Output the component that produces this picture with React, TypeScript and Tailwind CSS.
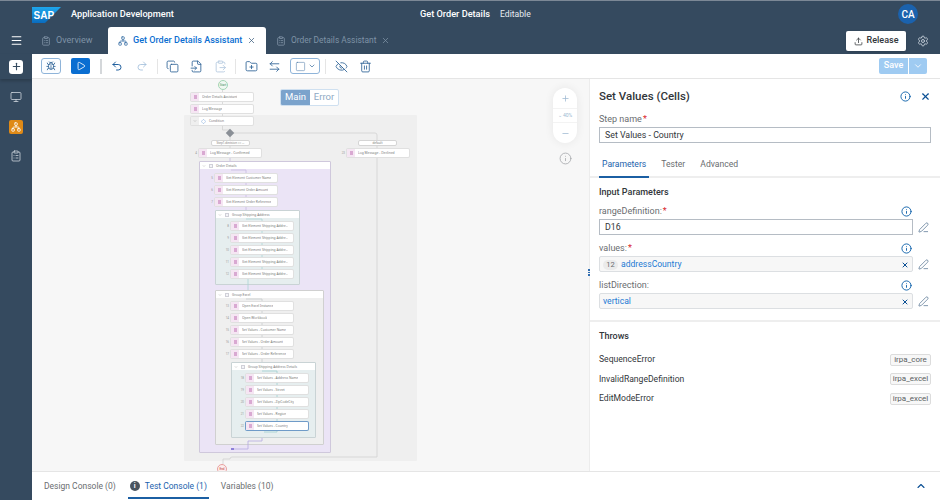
import React from "react";
import {
  Menu, Plus, Monitor, ClipboardList, Network, X, Upload, Settings, Bug, Play, Undo2, Redo2, Copy, FileInput,
  ClipboardPaste, FolderPlus, ArrowLeftRight, Square, ChevronDown, ChevronUp, EyeOff, Trash2, Info, Minus, PenLine, Diamond,
} from "lucide-react";

type N = { x: number; y: number; t: string; n?: string; sel?: boolean; w?: number };
const nodes: N[] = [
  { x: 191, y: 93, t: "Order Details Assistant" },
  { x: 191, y: 105, t: "Log Message" },
  { x: 199, y: 149, t: "Log Message - Confirmed", n: "4" },
  { x: 347, y: 149, t: "Log Message - Declined", n: "23" },
  { x: 215, y: 174, t: "Get Element Customer Name", n: "5" },
  { x: 215, y: 186, t: "Get Element Order Amount", n: "6" },
  { x: 215, y: 198, t: "Get Element Order Reference", n: "7" },
  { x: 231, y: 222, t: "Get Element Shipping Addre...", n: "8" },
  { x: 231, y: 234, t: "Get Element Shipping Addre...", n: "9" },
  { x: 231, y: 246, t: "Get Element Shipping Addre...", n: "10" },
  { x: 231, y: 258, t: "Get Element Shipping Addre...", n: "11" },
  { x: 231, y: 270, t: "Get Element Shipping Addre...", n: "12" },
  { x: 231, y: 302, t: "Open Excel Instance", n: "13" },
  { x: 231, y: 314, t: "Open Workbook", n: "14" },
  { x: 231, y: 326, t: "Set Values - Customer Name", n: "15" },
  { x: 231, y: 338, t: "Set Values - Order Amount", n: "16" },
  { x: 231, y: 350, t: "Set Values - Order Reference", n: "17" },
  { x: 246, y: 374, t: "Set Values - Address Name", n: "18" },
  { x: 246, y: 386, t: "Set Values - Street", n: "19" },
  { x: 246, y: 398, t: "Set Values - ZipCodeCity", n: "20" },
  { x: 246, y: 410, t: "Set Values - Region", n: "21" },
  { x: 246, y: 422, t: "Set Values - Country", n: "22", sel: true },
];
const groups = [
  { x: 199, y: 161, w: 132, h: 292, t: "Order Details", c: "bg-[#ebe4f6] border-[#cfc8dc]" },
  { x: 215, y: 210, w: 85, h: 75, t: "Group Shipping Address", c: "bg-[#e6eeef] border-[#c9d3d5]" },
  { x: 215, y: 290, w: 109, h: 155, t: "Group Excel", c: "bg-[#efefef] border-[#d0d0d0]" },
  { x: 231, y: 362, w: 85, h: 76, t: "Group Shipping Address Details", c: "bg-[#e6eeef] border-[#c9d3d5]" },
];

function Node({ x, y, t, n, sel }: N) {
  return (
    <div
      className={`absolute flex h-[8px] w-[62px] items-center rounded-[1px] bg-white ${sel ? "shadow-[0_0_0_1px_#6f9bc8]" : "shadow-[0_0_0_1px_#e0e0e0]"}`}
      style={{ left: x, top: y }}
    >
      {n && <span className="absolute left-[-8px] top-[3px] w-[6px] text-right text-[3px] leading-none text-[#999]">{n}</span>}
      <span className="flex h-full w-[8px] items-center justify-center bg-[#f5e6f3]">
        <span className="h-[4px] w-[3px] bg-[#d9a9d2]" />
      </span>
      <span className="ml-[3px] truncate font-['Noto_Sans',sans-serif] text-[3.3px] leading-none text-[#777]">{t}</span>
    </div>
  );
}

function Group({ x, y, w, h, t, c }: { x: number; y: number; w: number; h: number; t: string; c: string }) {
  return (
    <div className={`absolute rounded-[1px] border ${c}`} style={{ left: x, top: y, width: w, height: h }}>
      <div className="flex h-[7px] items-center bg-white">
        <ChevronDown className="ml-[2px] h-[4px] w-[4px] text-[#999]" />
        <span className="ml-[3px] h-[4px] w-[4px] border border-[#d0d0d8] bg-[#f4f4f8]" />
        <span className="ml-[3px] font-['Noto_Sans',sans-serif] text-[3.3px] leading-none text-[#777]">{t}</span>
      </div>
    </div>
  );
}

function Pencil() {
  return <PenLine className="h-[11px] w-[11px] text-[#4b6a8a]" strokeWidth={1.5} />;
}

function Field({ label, req, children }: { label: string; req?: boolean; children: React.ReactNode }) {
  return (
    <div className="mb-[6px]">
      <div className="flex h-[15px] items-center pr-[18px]">
        <span className="text-[9px] text-[#6a6d70]">{label}</span>
        {req && <span className="ml-[1px] text-[9px] text-[#d9262c]">*</span>}
        <Info className="ml-auto mr-[1px] h-[11px] w-[11px] text-[#0a5ea8]" />
      </div>
      <div className="flex items-center">
        <div className="flex h-[16px] w-[314px] items-center">{children}</div>
        <span className="ml-[5px]"><Pencil /></span>
      </div>
    </div>
  );
}

function Tool({ icon: I, light }: { icon: typeof Copy; light?: boolean }) {
  return <I className={`h-[13px] w-[13px] ${light ? "text-[#b4c9df]" : "text-[#2f6497]"}`} strokeWidth={1.6} />;
}

function Sep({ thick }: { thick?: boolean }) {
  return <span className={`block h-[15px] ${thick ? "w-[2px] bg-[#d4d7da]" : "w-px bg-[#e5e5e5]"}`} />;
}

function Throw({ name, badge }: { name: string; badge: string }) {
  return (
    <div className="flex h-[19.5px] items-center justify-between">
      <span className="text-[8.6px] text-[#32363a]">{name}</span>
      <span className="flex h-[12px] w-[41px] items-center justify-center rounded-[2px] border border-[#dcdcdc] bg-[#f7f7f7] text-[8px] text-[#5a5e62]">{badge}</span>
    </div>
  );
}

export default function App() {
  return (
    <div className="flex h-[500px] w-[940px] flex-col overflow-hidden bg-white font-['Roboto',sans-serif]">
      <header className="h-[54px] shrink-0 border-t border-[#7c8896] bg-[#354a5f]">
        <div className="relative flex h-[26px] items-center pl-[32px]">
          <svg width="29" height="16" viewBox="0 0 29 16" className="mt-[1px]">
            <defs>
              <linearGradient id="sapg" x1="0" y1="0" x2="0" y2="1">
                <stop offset="0" stopColor="#1ea6ec" />
                <stop offset="1" stopColor="#0a6cbe" />
              </linearGradient>
            </defs>
            <polygon points="0,0 29,0 13,16 0,16" fill="url(#sapg)" />
            <text x="1.5" y="11.5" fontSize="10" fontWeight="700" fill="#fff" fontFamily="Liberation Sans">SAP</text>
          </svg>
          <span className="ml-[10px] text-[9.2px] font-medium text-white">Application Development</span>
          <div className="absolute left-[420px] flex items-baseline gap-[10px]">
            <span className="text-[9.2px] font-medium text-white">Get Order Details</span>
            <span className="text-[8.6px] text-[#e8edf2]">Editable</span>
          </div>
          <span className="absolute left-[898px] top-[3px] flex h-[20px] w-[20px] items-center justify-center rounded-full bg-[#1b62ad] text-[10px] font-medium text-white">CA</span>
        </div>
        <div className="relative flex h-[27px] items-end">
          <span className="flex h-[27px] w-[32px] items-center justify-center">
            <Menu className="h-[13px] w-[13px] text-white" strokeWidth={2} />
          </span>
          <div className="flex h-[27px] w-[76px] items-center pl-[9px] text-[#7f93a6]">
            <ClipboardList className="h-[10px] w-[10px]" />
            <span className="ml-[5px] text-[9px]">Overview</span>
          </div>
          <div className="flex h-[27px] w-[158px] items-center rounded-t-[3px] bg-white pl-[10px] text-[#0a6ed1]">
            <Network className="h-[10px] w-[10px] shrink-0 text-[#3f74a8]" />
            <span className="ml-[5px] whitespace-nowrap text-[9.05px] font-medium">Get Order Details Assistant</span>
            <X className="ml-[5px] h-[9px] w-[9px] shrink-0 text-[#3f6080]" />
          </div>
          <div className="flex h-[27px] items-center pl-[10px] text-[#7f93a6]">
            <ClipboardList className="h-[10px] w-[10px]" />
            <span className="ml-[5px] text-[8.4px]">Order Details Assistant</span>
            <X className="ml-[5px] h-[9px] w-[9px]" />
          </div>
          <div className="absolute left-[846px] top-[4px] flex h-[20px] w-[60px] items-center justify-center rounded-[2px] bg-white shadow-sm">
            <Upload className="h-[9px] w-[9px] text-[#32363a]" />
            <span className="ml-[4px] text-[9px] font-medium text-[#32363a]">Release</span>
          </div>
          <Settings className="absolute left-[917px] top-[8px] h-[12px] w-[12px] text-[#b9c4cf]" />
        </div>
      </header>

      <div className="flex min-h-0 flex-1">
        <aside className="flex w-[32px] shrink-0 flex-col items-center bg-[#354a5f]">
          <div className="flex h-[25px] w-full items-center justify-center shadow-[0_2px_3px_rgba(0,0,0,0.2)]">
            <span className="flex h-[14px] w-[14px] items-center justify-center rounded-[3px] bg-white">
              <Plus className="h-[11px] w-[11px] text-[#354a5f]" strokeWidth={2.5} />
            </span>
          </div>
          <Monitor className="mt-[12px] h-[12px] w-[12px] text-[#d5dce3]" strokeWidth={1.5} />
          <span className="mt-[17px] flex h-[14px] w-[14px] items-center justify-center rounded-[2px] bg-[#df8a17]">
            <Network className="h-[10px] w-[10px] text-white" />
          </span>
          <ClipboardList className="mt-[16px] h-[12px] w-[12px] text-[#d5dce3]" strokeWidth={1.5} />
        </aside>

        <div className="flex min-w-0 flex-1 flex-col">
          <div className="flex h-[25px] shrink-0 items-center border-b border-[#e5e5e5] bg-white pl-[9px]">
            <span className="flex h-[16px] w-[20px] items-center justify-center rounded-[3px] border border-[#8fb4d9] bg-[#fbfdff]">
              <Bug className="h-[10px] w-[10px] text-[#2f6497]" />
            </span>
            <span className="ml-[10px] flex h-[16px] w-[19px] items-center justify-center rounded-[2px] bg-[#0a6ed1]">
              <Play className="h-[10px] w-[10px] text-white" />
            </span>
            <span className="ml-[10px]"><Sep thick /></span>
            <span className="ml-[9px] flex items-center">
              <Undo2 className="h-[12px] w-[12px] text-[#0a4f94]" strokeWidth={1.8} />
              <span className="ml-[13px]"><Redo2 className="h-[12px] w-[12px] text-[#9dbbd9]" strokeWidth={1.6} /></span>
              <span className="ml-[9px] mr-[8px]"><Sep /></span>
              <Tool icon={Copy} />
              <span className="ml-[11px]"><Tool icon={FileInput} /></span>
              <span className="ml-[11px]"><Tool icon={ClipboardPaste} light /></span>
              <span className="ml-[8px] mr-[9px]"><Sep /></span>
              <Tool icon={FolderPlus} />
              <span className="ml-[10px]"><Tool icon={ArrowLeftRight} /></span>
              <span className="ml-[9px] flex h-[16px] w-[30px] items-center justify-center gap-[2px] rounded-[3px] border border-[#8fb4d9]">
                <Square className="h-[11px] w-[11px] text-[#2f6497]" strokeWidth={1} />
                <ChevronDown className="h-[8px] w-[8px] text-[#2f6497]" />
              </span>
              <span className="ml-[5px] mr-[9px]"><Sep /></span>
              <Tool icon={EyeOff} />
              <span className="ml-[11px]"><Tool icon={Trash2} /></span>
            </span>
            <div className="ml-auto mr-[13px] flex h-[16px]">
              <span className="flex w-[29px] items-center justify-center rounded-l-[2px] bg-[#9fcbf2] text-[9px] font-medium text-white">Save</span>
              <span className="ml-px flex w-[18px] items-center justify-center rounded-r-[2px] bg-[#9fcbf2]">
                <ChevronDown className="h-[10px] w-[10px] text-white" />
              </span>
            </div>
          </div>

          <div className="flex min-h-0 flex-1">
            <main className="relative min-w-0 flex-1 overflow-hidden bg-[#f7f7f7]">
              <div className="absolute" style={{ left: -32, top: -79, width: 940, height: 500 }}>
                <div className="absolute left-[184px] top-[115px] h-[346px] w-[233px] rounded-[1px] bg-[#efefef]" />
                {groups.map((g) => <Group key={g.t} {...g} />)}
                <svg className="absolute left-0 top-0" width="940" height="500" fill="none">
                  <path d="M222.5 90V117M222.5 126V130L230 130V149M230 133H375Q377 133 377 135V457H232Q230 457 230 459H223V464" stroke="#d2d2d2" strokeWidth="0.8" />
                  <path d="M230 158V161M231 170H246V210" stroke="#c6b9e2" strokeWidth="0.8" />
                  <path d="M246 219H262V276H248V290" stroke="#a9d3d6" strokeWidth="0.8" />
                  <path d="M246 299H262V362" stroke="#c6cccd" strokeWidth="0.8" />
                  <path d="M262 371H277V432H264" stroke="#a0ced1" strokeWidth="0.8" />
                  <path d="M262 438V441H248V449H232" stroke="#b5a9e2" strokeWidth="0.8" />
                  <rect x="231" y="448" width="3" height="2" fill="#8d80d8" />
                </svg>
                <div className="absolute left-[218px] top-[80px] flex h-[10px] w-[10px] items-center justify-center rounded-full border border-[#a4d6b6] bg-[#f0f8f2] text-[3px] text-[#3b8a5c]">Start</div>
                {nodes.map((n) => <Node key={n.t + n.y + n.x} {...n} />)}
                <div className="absolute left-[191px] top-[117px] flex h-[8px] w-[62px] items-center rounded-[1px] bg-white shadow-[0_0_0_1px_#e0e0e0]">
                  <span className="flex h-full w-[8px] items-center justify-center bg-[#efefef]">
                    <ChevronDown className="h-[4px] w-[4px] text-[#888]" />
                  </span>
                  <Diamond className="ml-[2px] h-[5px] w-[5px] text-[#5a8fd0]" />
                  <span className="ml-[3px] font-['Noto_Sans',sans-serif] text-[3.3px] leading-none text-[#777]">Condition</span>
                </div>
                <div className="absolute left-[227px] top-[130px] h-[6px] w-[6px] rotate-45 bg-[#8a8f96]" />
                <div className="absolute left-[211px] top-[140px] flex h-[6px] w-[39px] items-center justify-center rounded-[2px] border-[0.5px] border-[#d5d5d5] bg-white font-['Noto_Sans',sans-serif] text-[3px] text-[#777]">Step1.decision == ...</div>
                <div className="absolute left-[358px] top-[140px] flex h-[6px] w-[39px] items-center justify-center rounded-[2px] border-[0.5px] border-[#d5d5d5] bg-white font-['Noto_Sans',sans-serif] text-[3px] text-[#777]">default</div>
                <div className="absolute left-[217px] top-[464px] flex h-[10px] w-[10px] items-center justify-center rounded-full border border-[#e8a0a0] bg-[#fdeeee] text-[3px] text-[#b33]">End</div>
                <div className="absolute left-[280px] top-[89px] flex h-[17px] w-[59px] overflow-hidden rounded-[2px] border border-[#cfe0f0] bg-white text-[9.5px]">
                  <span className="flex w-[29px] items-center justify-center bg-[#7ba3cc] text-white">Main</span>
                  <span className="flex flex-1 items-center justify-center text-[#8ea9c4]">Error</span>
                </div>
                <div className="absolute left-[553px] top-[88px] flex h-[55px] w-[24px] flex-col items-center rounded-[12px] bg-white shadow-[0_0_10px_rgba(0,0,0,0.07)]">
                  <span className="flex h-[20px] items-center"><Plus className="h-[9px] w-[9px] text-[#9db8d2]" /></span>
                  <span className="flex h-[15px] w-full items-center justify-center border-y border-[#f3f3f3] text-[5px] text-[#9db8d2]">⌄ 40%</span>
                  <span className="flex h-[20px] items-center"><Minus className="h-[9px] w-[9px] text-[#9db8d2]" /></span>
                </div>
                <Info className="absolute left-[559px] top-[152px] h-[13px] w-[13px] text-[#a5a8ab]" strokeWidth={1.5} />
              </div>
            </main>

            <section className="relative w-[351px] shrink-0 border-l-[1px] border-[#ececec] bg-white">
              <span className="absolute left-[-2px] top-[190px] flex flex-col gap-[1px]">
                <i className="h-[1.5px] w-[2px] bg-[#2f6cb0]" />
                <i className="h-[1.5px] w-[2px] bg-[#2f6cb0]" />
                <i className="h-[1.5px] w-[2px] bg-[#2f6cb0]" />
              </span>
              <div className="px-[9px]">
                <div className="flex h-[35px] items-center">
                  <h2 className="text-[11.5px] font-medium text-[#32363a]">Set Values (Cells)</h2>
                  <Info className="ml-auto h-[11px] w-[11px] text-[#0a5ea8]" />
                  <X className="ml-[9px] h-[11px] w-[11px] text-[#0a4f94]" strokeWidth={2.5} />
                </div>
                <div className="flex h-[12px] items-center text-[9px] text-[#6a6d70]">
                  Step name<span className="ml-px text-[#d9262c]">*</span>
                </div>
                <div className="mt-[1px] flex h-[16px] items-center border border-[#b5bcc4] bg-white pl-[5px] pt-[1px] text-[8.8px] text-[#32363a]">Set Values - Country</div>
              </div>
              <div className="mt-[13px] flex h-[22px] items-start gap-[15px] border-b-2 border-[#eeeeee] pl-[12px] pt-[2px] text-[8.6px] text-[#6a6d70]">
                <span className="relative text-[#1b62ad]">
                  Parameters
                  <i className="absolute bottom-[-7px] left-[-3px] right-[-3px] h-[2px] bg-[#1b5fa3]" />
                </span>
                <span>Tester</span>
                <span>Advanced</span>
              </div>
              <div className="border-b-2 border-[#eeeeee] px-[9px] pb-[5px]">
                <h3 className="flex h-[26px] items-center pt-[4px] text-[9px] font-medium text-[#32363a]">Input Parameters</h3>
                <Field label="rangeDefinition:" req>
                  <div className="flex h-full w-full items-center border border-[#b5bcc4] bg-white pl-[5px] pt-[1px] text-[8.8px] text-[#32363a]">D16</div>
                </Field>
                <Field label="values:" req>
                  <div className="flex h-full w-full items-center rounded-[2px] border border-[#dcdfe2] bg-[#f7f7f7] pl-[3px] pr-[3px] pt-[1px] text-[8.6px]">
                    <span className="flex h-[10px] w-[15px] items-center justify-center rounded-full bg-[#ebebeb] text-[7.5px] text-[#6a6d70]">12</span>
                    <span className="ml-[3px] text-[#1b7ad4]">addressCountry</span>
                    <X className="ml-auto h-[8px] w-[8px] text-[#0a4f94]" strokeWidth={3} />
                  </div>
                </Field>
                <Field label="listDirection:">
                  <div className="flex h-full w-full items-center rounded-[2px] border border-[#dcdfe2] bg-[#f7f7f7] pl-[3px] pr-[3px] pt-[1px] text-[8.6px]">
                    <span className="text-[#1b7ad4]">vertical</span>
                    <X className="ml-auto h-[8px] w-[8px] text-[#0a4f94]" strokeWidth={3} />
                  </div>
                </Field>
              </div>
              <div className="px-[9px]">
                <h3 className="flex h-[26px] items-center pt-[4px] text-[9px] font-medium text-[#32363a]">Throws</h3>
                <div className="mt-[2px]">
                  <Throw name="SequenceError" badge="irpa_core" />
                  <Throw name="InvalidRangeDefinition" badge="irpa_excel" />
                  <Throw name="EditModeError" badge="irpa_excel" />
                </div>
              </div>
            </section>
          </div>

          <footer className="relative z-10 flex h-[29px] shrink-0 items-center border-t border-[#e5e5e5] bg-white pl-[12px] text-[8.5px] text-[#6a6d70]">
            <span>Design Console (0)</span>
            <span className="relative ml-[14px] flex h-full items-center text-[#1b62ad]">
              <span className="flex h-[10px] w-[10px] items-center justify-center rounded-full bg-[#4a5560] text-[7px] font-bold text-white">i</span>
              <span className="ml-[5px]">Test Console (1)</span>
              <i className="absolute bottom-[1px] left-[-2px] right-[-2px] h-[2px] bg-[#1b5fa3]" />
            </span>
            <span className="ml-[14px]">Variables (10)</span>
            <ChevronUp className="ml-auto mr-[13px] h-[12px] w-[12px] text-[#0a4f94]" strokeWidth={2.2} />
          </footer>
        </div>
      </div>
    </div>
  );
}
